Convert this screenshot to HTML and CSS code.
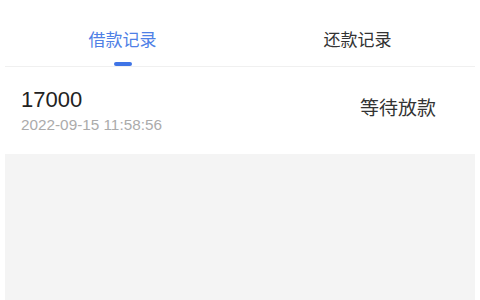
FILE: index.html
```html
<!DOCTYPE html>
<html>
<head>
<meta charset="utf-8">
<link rel="stylesheet" href="styles.css">
</head>
<body>
<div class="page">
  <div class="tabs">
    <div class="tab active"><span class="tab-label">借款记录</span><span class="indicator"></span></div>
    <div class="tab"><span class="tab-label">还款记录</span></div>
  </div>
  <div class="record">
    <div class="record-left">
      <div class="amount">17000</div>
      <div class="time">2022-09-15 11:58:56</div>
    </div>
    <div class="status">等待放款</div>
  </div>
  <div class="rest"></div>
</div>
</body>
</html>
```

FILE: styles.css
```css
html, body {
  margin: 0;
  padding: 0;
  background: #ffffff;
  width: 480px;
  height: 300px;
  overflow: hidden;
  font-family: "Liberation Sans", "Noto Sans CJK SC", sans-serif;
}
.page {
  margin: 0 5px;
  height: 300px;
  display: flex;
  flex-direction: column;
}
.tabs {
  display: flex;
  height: 66px;
  border-bottom: 1px solid #f0f0f0;
}
.tab {
  flex: 1;
  display: flex;
  flex-direction: column;
  align-items: center;
  padding-top: 31px;
  box-sizing: border-box;
}
.tab-label {
  font-size: 17px;
  line-height: 20px;
  color: #333333;
}
.tab.active .tab-label {
  color: #4f80e6;
}
.indicator {
  margin-top: 11px;
  width: 18px;
  height: 4px;
  border-radius: 2px;
  background: #3f74e6;
}
.record {
  height: 87px;
  display: flex;
  align-items: flex-start;
  justify-content: space-between;
  padding: 0 39px 0 16px;
}
.amount {
  margin-top: 21px;
  font-size: 22px;
  line-height: 24px;
  color: #222222;
}
.time {
  margin-top: 5px;
  font-size: 15.3px;
  line-height: 16px;
  color: #ababab;
}
.status {
  margin-top: 31px;
  font-size: 19px;
  line-height: 22px;
  color: #333333;
}
.rest {
  flex: 1;
  background: #f4f4f4;
}
```
